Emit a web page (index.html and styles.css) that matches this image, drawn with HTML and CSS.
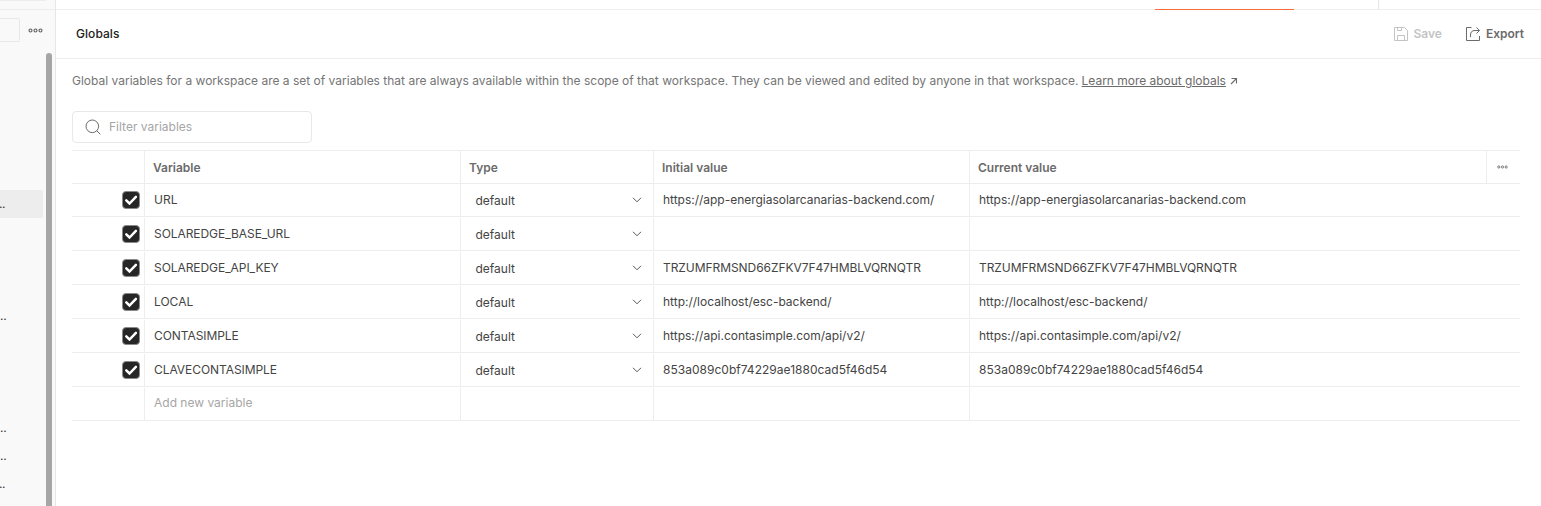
FILE: index.html
```
<!DOCTYPE html>
<html lang="en">
<head>
<meta charset="utf-8">
<title>Globals</title>
<link rel="stylesheet" href="styles.css">
</head>
<body>
<svg class="defs" aria-hidden="true">
  <symbol id="check" viewBox="0 0 16 16"><path d="M3.300 8.300l3.200 3.200 6.400-6.600" fill="none" stroke="#fff" stroke-width="2.500" stroke-linecap="round"/></symbol>
  <symbol id="chevron" viewBox="0 0 10 6"><path d="M1 .8l4 4 4-4" fill="none" stroke="#555" stroke-width="1"/></symbol>
  <symbol id="dots" viewBox="0 0 15 5"><g fill="none" stroke="#5f5f5f" stroke-width="1.100"><circle cx="2.500" cy="2.500" r="1.500"/><circle cx="7.500" cy="2.500" r="1.500"/><circle cx="12.500" cy="2.500" r="1.500"/></g></symbol>
</svg>
<div class="app">
  <aside class="sidebar">
    <div class="side-top"><span></span></div>
    <div class="side-tools"><span class="side-input"></span><svg class="side-dots"><use href="#dots"/></svg></div>
    <div class="side-body">
      <div class="side-list">
        <div class="side-item active"><span>..</span></div>
        <div class="side-item gap-b"><span class="far">..</span></div>
        <div class="side-item gap-b"><span class="far">..</span></div>
        <div class="side-item"><span class="far">..</span></div>
        <div class="side-item"><span>..</span></div>
      </div>
      <div class="scrollbar"></div>
    </div>
  </aside>
  <main class="main">
    <div class="tabs"><span class="tab-active"></span><span class="tab-end"></span></div>
    <header class="header">
      <h1 class="title">Globals</h1>
      <button class="btn disabled"><svg viewBox="0 0 14 14" width="14" height="14"><path d="M.5 .5h10l3 3v10h-13zM3.500 .5v3h4v-3M3.500 13.500v-5h7v5" fill="none" stroke="currentColor"/></svg>Save</button>
      <button class="btn export"><svg viewBox="0 0 14 14" width="14" height="14"><path d="M5.500 .5H.5v13h13V9M4.500 10V8q0-4.500 4.500-4.500h4.500M10.500 .5l3 3-3 3" fill="none" stroke="currentColor"/></svg>Export</button>
    </header>
    <section class="content">
      <p class="desc"><span class="desc-text">Global variables for a workspace are a set of variables that are always available within the scope of that workspace. They can be viewed and edited by anyone in that workspace.</span><a class="link">Learn more about globals</a><svg class="arrow" viewBox="0 0 8 8"><path d="M1 7l5.500-5.500M1.500 1.500h5v5" fill="none" stroke="#6b6b6b" stroke-width="1.100"/></svg></p>
      <div class="filter"><svg viewBox="0 0 16 16" width="16" height="16"><circle cx="7.300" cy="7.300" r="6.300" fill="none" stroke="#6b6b6b"/><path d="M11.800 11.800l3.500 3.500" stroke="#6b6b6b"/></svg><span>Filter variables</span></div>
      <div class="table">
        <div class="row head"><div class="pick"></div><div class="cell">Variable</div><div class="cell">Type</div><div class="cell">Initial value</div><div class="cell">Current value</div><div class="cell more"><svg class="head-dots"><use href="#dots"/></svg></div></div>
        <div class="row first"><div class="pick"><span class="box"><svg><use href="#check"/></svg></span></div><div class="cell"><span class="t">URL</span></div><div class="cell type"><span>default</span><svg><use href="#chevron"/></svg></div><div class="cell"><span class="t url">https://app-energiasolarcanarias-backend.com/</span></div><div class="cell wide"><span class="t url">https://app-energiasolarcanarias-backend.com</span></div></div>
        <div class="row"><div class="pick"><span class="box"><svg><use href="#check"/></svg></span></div><div class="cell"><span class="t caps">SOLAREDGE_BASE_URL</span></div><div class="cell type"><span>default</span><svg><use href="#chevron"/></svg></div><div class="cell"></div><div class="cell wide"></div></div>
        <div class="row"><div class="pick"><span class="box"><svg><use href="#check"/></svg></span></div><div class="cell"><span class="t caps">SOLAREDGE_API_KEY</span></div><div class="cell type"><span>default</span><svg><use href="#chevron"/></svg></div><div class="cell"><span class="t caps">TRZUMFRMSND66ZFKV7F47HMBLVQRNQTR</span></div><div class="cell wide"><span class="t caps">TRZUMFRMSND66ZFKV7F47HMBLVQRNQTR</span></div></div>
        <div class="row"><div class="pick"><span class="box"><svg><use href="#check"/></svg></span></div><div class="cell"><span class="t">LOCAL</span></div><div class="cell type"><span>default</span><svg><use href="#chevron"/></svg></div><div class="cell"><span class="t">http://localhost/esc-backend/</span></div><div class="cell wide"><span class="t">http://localhost/esc-backend/</span></div></div>
        <div class="row"><div class="pick"><span class="box"><svg><use href="#check"/></svg></span></div><div class="cell"><span class="t caps">CONTASIMPLE</span></div><div class="cell type"><span>default</span><svg><use href="#chevron"/></svg></div><div class="cell"><span class="t">https://api.contasimple.com/api/v2/</span></div><div class="cell wide"><span class="t">https://api.contasimple.com/api/v2/</span></div></div>
        <div class="row"><div class="pick"><span class="box"><svg><use href="#check"/></svg></span></div><div class="cell"><span class="t caps">CLAVECONTASIMPLE</span></div><div class="cell type"><span>default</span><svg><use href="#chevron"/></svg></div><div class="cell"><span class="t hash">853a089c0bf74229ae1880cad5f46d54</span></div><div class="cell wide"><span class="t hash">853a089c0bf74229ae1880cad5f46d54</span></div></div>
        <div class="row add"><div class="pick"></div><div class="cell"><span class="t">Add new variable</span></div><div class="cell"></div><div class="cell"></div><div class="cell wide"></div></div>
      </div>
    </section>
  </main>
</div>
</body>
</html>
```
FILE: styles.css
```
* { box-sizing: border-box; }
body { margin: 0; background: #fff; color: #444; font: 12px/16px Inter, sans-serif; overflow: hidden; }
svg { display: block; flex: none; }
.defs { width: 0; height: 0; position: absolute; }
.app { display: flex; height: 506px; }

.sidebar { width: 56px; background: #f9f9f9; border-right: 1px solid #e6e6e6; display: flex; flex-direction: column; flex: none; }
.side-top { height: 10px; border-bottom: 1px solid #ededed; flex: none; }
.side-top span { display: block; width: 46px; height: 1px; background: #ededed; }
.side-tools { display: flex; padding-top: 8px; height: 43px; flex: none; }
.side-input { width: 20px; height: 24px; border: 1px solid #e8e8e8; border-left: 0; border-radius: 0 2px 2px 0; }
.side-dots { width: 15px; height: 5px; margin: 9.500px 0 0 8.400px; }
.side-body { display: flex; flex: 1; }
.side-list { width: 46px; padding-top: 137px; }
.side-item { width: 43px; height: 28px; line-height: 27px; color: #333; display: flex; }
.side-item span { letter-spacing: -0.400px; margin-left: -1px; }
.side-item .far { margin-left: 0; letter-spacing: -0.200px; }
.side-item.active { background: #ededed; }
.gap-b { margin-top: 84px; }
.scrollbar { width: 6px; background: #a6a6a6; border-radius: 3px 3px 0 0; }

.main { flex: 1; min-width: 0; }
.tabs { height: 10px; border-bottom: 1px solid #ededed; display: flex; }
.tab-active { margin-left: 1099px; width: 139px; height: 10px; border-bottom: 1px solid #ff6c37; }
.tab-end { margin-left: 84px; width: 1px; height: 9px; background: #e6e6e6; }
.header { height: 49px; border-bottom: 1px solid #ededed; display: flex; align-items: center; padding: 0 17px 0 20px; }
.title { margin: 0; font-size: 12px; font-weight: 500; color: #212121; flex: 1; letter-spacing: 0.050px; }
.btn { display: flex; align-items: center; gap: 5px; border: 0; background: none; padding: 0; font: 600 12px/16px Inter, sans-serif; color: #6b6b6b; }
.disabled { color: #c4c4c4; }
.export { margin-left: 24px; gap: 6px; }

.content { padding: 14px 21px 0 16px; }
.desc { margin: 0; display: flex; color: #757575; white-space: nowrap; }
.link { margin-left: 3px; text-decoration: underline; color: #6b6b6b; letter-spacing: -0.020px; }
.arrow { width: 8px; height: 8px; margin: 4px 0 0 4px; }
.filter { margin-top: 22px; width: 240px; height: 32px; border: 1px solid #e8e8e8; border-radius: 4px; display: flex; align-items: center; gap: 8px; padding-left: 12px; color: #a6a6a6; }

.table { margin-top: 7px; border-top: 1px solid #ededed; }
.row { display: grid; grid-template-columns: 72px 316px 193px 316px 517px 34px; height: 34px; padding-top: 1px; border-bottom: 1px solid #ededed; }
.head, .first { height: 33px; padding-top: 0; }
.head { font-weight: 600; color: #6b6b6b; }
.cell { border-left: 1px solid #ededed; padding-left: 8px; display: flex; align-items: center; white-space: nowrap; }
.head .cell { padding-top: 1px; }
.head .more { padding-top: 0; }
.wide { grid-column: 5 / 7; }
.t { padding-left: 1px; }
.caps { letter-spacing: -0.060px; }
.url { letter-spacing: -0.020px; }
.hash { letter-spacing: 0.020px; }
.pick { display: flex; align-items: center; justify-content: flex-end; padding-right: 4px; }
.box { width: 18px; height: 18px; border-radius: 4px; background: #262626; border: 1px solid #8a8a8a; }
.box svg { width: 16px; height: 16px; }
.type { justify-content: space-between; padding: 1px 11px 0 14.500px; }
.type svg { width: 10px; height: 6px; margin-bottom: 2px; }
.head-dots { width: 11px; height: 4px; margin-left: 2px; }
.add { color: #a6a6a6; }
.add .cell { padding-bottom: 2px; }
```
